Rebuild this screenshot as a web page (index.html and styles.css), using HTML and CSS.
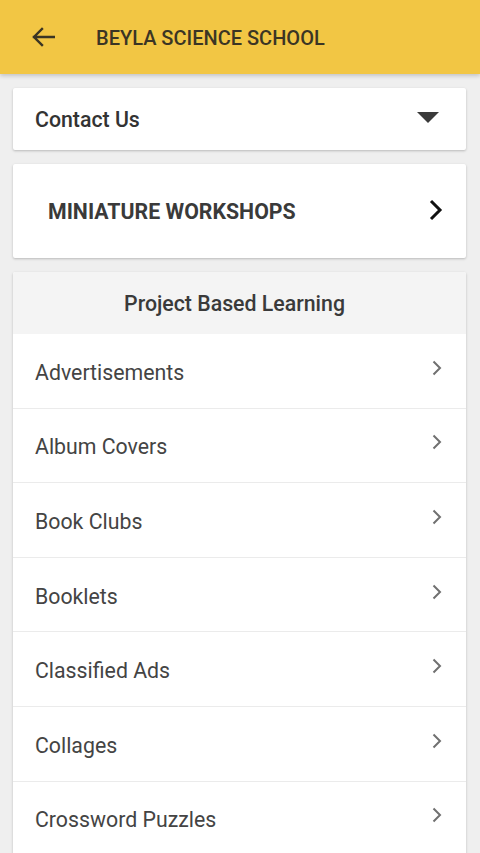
FILE: index.html
```html
<!DOCTYPE html>
<html>
<head>
<meta charset="utf-8">
<link rel="stylesheet" href="styles.css">
</head>
<body>
<header class="appbar">
  <svg class="back" width="24" height="20" viewBox="0 0 24 20">
    <path d="M23 10H3M11 2L3 10l8 8" fill="none" stroke="#3b3524" stroke-width="2.4" stroke-linecap="square"/>
  </svg>
  <h1 class="title">BEYLA SCIENCE SCHOOL</h1>
</header>
<main class="content">
  <div class="card contact">
    <span class="contact-label">Contact Us</span>
    <svg class="caret" width="22" height="11" viewBox="0 0 22 11"><path d="M0 0h22L11 11z" fill="#3a3a3a"/></svg>
  </div>
  <div class="card workshops">
    <span class="workshops-label">MINIATURE WORKSHOPS</span>
    <svg class="chev-big" width="14" height="22" viewBox="0 0 14 22"><path d="M2 2l9 9-9 9" fill="none" stroke="#111" stroke-width="3"/></svg>
  </div>
  <div class="card pbl">
    <div class="pbl-head">Project Based Learning</div>
    <ul class="list">
      <li class="row"><span>Advertisements</span><svg class="chev" width="10" height="16" viewBox="0 0 10 16"><path d="M1.5 1.5l6.5 6.5-6.5 6.5" fill="none" stroke="#707070" stroke-width="2"/></svg></li>
      <li class="row"><span>Album Covers</span><svg class="chev" width="10" height="16" viewBox="0 0 10 16"><path d="M1.5 1.5l6.5 6.5-6.5 6.5" fill="none" stroke="#707070" stroke-width="2"/></svg></li>
      <li class="row"><span>Book Clubs</span><svg class="chev" width="10" height="16" viewBox="0 0 10 16"><path d="M1.5 1.5l6.5 6.5-6.5 6.5" fill="none" stroke="#707070" stroke-width="2"/></svg></li>
      <li class="row"><span>Booklets</span><svg class="chev" width="10" height="16" viewBox="0 0 10 16"><path d="M1.5 1.5l6.5 6.5-6.5 6.5" fill="none" stroke="#707070" stroke-width="2"/></svg></li>
      <li class="row"><span>Classified Ads</span><svg class="chev" width="10" height="16" viewBox="0 0 10 16"><path d="M1.5 1.5l6.5 6.5-6.5 6.5" fill="none" stroke="#707070" stroke-width="2"/></svg></li>
      <li class="row"><span>Collages</span><svg class="chev" width="10" height="16" viewBox="0 0 10 16"><path d="M1.5 1.5l6.5 6.5-6.5 6.5" fill="none" stroke="#707070" stroke-width="2"/></svg></li>
      <li class="row"><span>Crossword Puzzles</span><svg class="chev" width="10" height="16" viewBox="0 0 10 16"><path d="M1.5 1.5l6.5 6.5-6.5 6.5" fill="none" stroke="#707070" stroke-width="2"/></svg></li>
    </ul>
  </div>
</main>
</body>
</html>
```
FILE: styles.css
```css
html, body {
  margin: 0;
  padding: 0;
  background: #efefef;
  font-family: Roboto, "Noto Sans", sans-serif;
  overflow: hidden;
  height: 853px;
}
.appbar {
  height: 74px;
  background: #f2c644;
  display: flex;
  align-items: center;
  box-shadow: 0 2px 4px rgba(0,0,0,0.18);
  position: relative;
  z-index: 2;
}
.back {
  margin-left: 31px;
}
.title {
  margin: 2px 0 0 41px;
  font-size: 20px;
  font-weight: 500;
  color: #3b3524;
}
.content {
  padding: 14px 14px 0 13px;
  display: flex;
  flex-direction: column;
  gap: 14px;
}
.card {
  background: #fff;
  border-radius: 2px;
  box-shadow: 0 1px 3px rgba(0,0,0,0.16), 0 1px 2px rgba(0,0,0,0.08);
}
.contact {
  height: 62px;
  display: flex;
  align-items: center;
  justify-content: space-between;
  padding: 0 27px 0 22px;
}
.contact-label {
  font-size: 21.3px;
  font-weight: 500;
  color: #333;
  margin-top: 1px;
}
.caret {
  margin-top: -4px;
}
.workshops {
  height: 94px;
  display: flex;
  align-items: center;
  justify-content: space-between;
  padding: 0 23px 0 35px;
}
.workshops-label {
  font-size: 21.3px;
  font-weight: 700;
  color: #3a3a3a;
  margin-top: 1px;
}
.chev-big {
  margin-top: -2px;
}
.pbl {
  overflow: hidden;
}
.pbl-head {
  height: 62px;
  background: #f4f4f4;
  display: flex;
  align-items: center;
  justify-content: center;
  font-size: 21.3px;
  font-weight: 500;
  color: #3a3a3a;
  padding-right: 10px;
}
.list {
  list-style: none;
  margin: 0;
  padding: 0;
}
.row {
  height: 73.6px;
  border-bottom: 1px solid #ebebeb;
  display: flex;
  align-items: center;
  justify-content: space-between;
  padding: 0 24px 0 22px;
  font-size: 21.3px;
  color: #444;
}
.row span {
  margin-top: 3px;
}
.chev {
  margin-top: -6px;
}
```
